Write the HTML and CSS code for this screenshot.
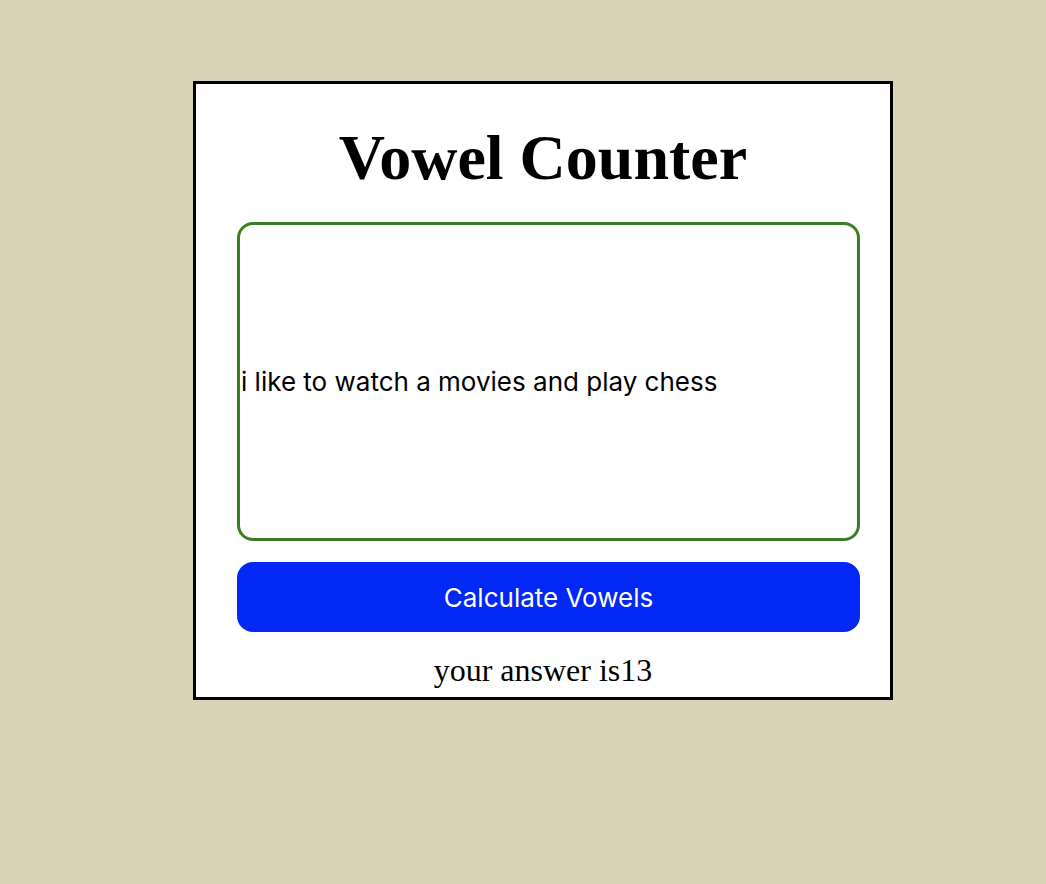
FILE: index.html
```html
<!DOCTYPE html>
<html>
<head>
<meta charset="utf-8">
<link rel="stylesheet" href="styles.css">
</head>
<body>
<div class="card">
  <h1 class="title">Vowel Counter</h1>
  <div class="form">
    <input class="text-input" type="text" value="i like to watch a movies and play chess">
    <button class="calc-btn">Calculate Vowels</button>
  </div>
  <p class="answer">your answer is13</p>
</div>
</body>
</html>
```

FILE: styles.css
```css
html, body {
  margin: 0;
  padding: 0;
}
body {
  background: #d8d3b7;
  font-family: "Liberation Serif", "Times New Roman", serif;
  height: 884px;
}
.card {
  margin-left: 193px;
  margin-top: 81px;
  width: 694px;
  height: 613px;
  border: 3px solid #000;
  background: #fff;
  display: flex;
  flex-direction: column;
}
.title {
  margin: 37px 0 0;
  text-align: center;
  font-size: 64px;
  line-height: 74px;
  font-weight: bold;
}
.form {
  display: flex;
  flex-direction: column;
  gap: 21px;
  padding: 27px 30px 0 41px;
}
.text-input {
  box-sizing: border-box;
  height: 319px;
  width: 100%;
  margin: 0;
  padding: 0 0 0 1px;
  border: 3px solid #3a7d22;
  border-radius: 16px;
  font-family: Inter, "Liberation Sans", Arial, sans-serif;
  font-size: 26px;
  color: #000;
  outline: none;
}
.calc-btn {
  height: 70px;
  width: 100%;
  border: none;
  border-radius: 16px;
  background: #0328f5;
  color: #fff;
  font-family: Inter, "Liberation Sans", Arial, sans-serif;
  font-size: 26px;
  margin: 0;
  padding: 0;
}
.answer {
  margin: 20px 0 0;
  text-align: center;
  font-size: 32px;
  line-height: 36px;
}
```
